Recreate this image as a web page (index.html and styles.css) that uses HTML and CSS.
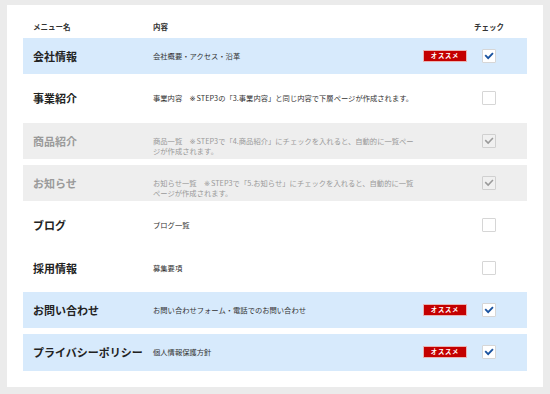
FILE: index.html
```html
<!DOCTYPE html>
<html lang="ja">
<head>
    <meta charset="UTF-8">
    <title>メニュー選択</title>
    <link rel="stylesheet" href="styles.css">
</head>
<body>
    <div class="card">
        <div class="menu-head">
            <div>メニュー名</div>
            <div>内容</div>
            <div></div>
            <div class="head-check">チェック</div>
        </div>
        <div class="menu-list">
            <div class="menu-row is-recommended">
                <div class="menu-name">会社情報</div>
                <div class="menu-desc">会社概要・アクセス・沿革</div>
                <div class="badge">オススメ</div>
                <div class="check-cell"><span class="checkbox is-checked"><svg viewBox="0 0 14 14"><path d="M2.6 6 L6 9.4 L11.6 3.6"/></svg></span></div>
            </div>
            <div class="menu-row">
                <div class="menu-name">事業紹介</div>
                <div class="menu-desc">事業内容　<span class="mark">※</span>STEP3の「3.事業内容」と同じ内容で下層ページが作成されます。</div>
                <div></div>
                <div class="check-cell"><span class="checkbox"></span></div>
            </div>
            <div class="menu-row is-disabled">
                <div class="menu-name">商品紹介</div>
                <div class="menu-desc">商品一覧　<span class="mark">※</span>STEP3で「4.商品紹介」にチェックを入れると、自動的に一覧ページが作成されます。</div>
                <div></div>
                <div class="check-cell"><span class="checkbox is-checked"><svg viewBox="0 0 14 14"><path d="M2.6 6 L6 9.4 L11.6 3.6"/></svg></span></div>
            </div>
            <div class="menu-row is-disabled">
                <div class="menu-name">お知らせ</div>
                <div class="menu-desc">お知らせ一覧　<span class="mark">※</span>STEP3で「5.お知らせ」にチェックを入れると、自動的に一覧ページが作成されます。</div>
                <div></div>
                <div class="check-cell"><span class="checkbox is-checked"><svg viewBox="0 0 14 14"><path d="M2.6 6 L6 9.4 L11.6 3.6"/></svg></span></div>
            </div>
            <div class="menu-row">
                <div class="menu-name">ブログ</div>
                <div class="menu-desc">ブログ一覧</div>
                <div></div>
                <div class="check-cell"><span class="checkbox"></span></div>
            </div>
            <div class="menu-row">
                <div class="menu-name">採用情報</div>
                <div class="menu-desc">募集要項</div>
                <div></div>
                <div class="check-cell"><span class="checkbox"></span></div>
            </div>
            <div class="menu-row is-recommended">
                <div class="menu-name">お問い合わせ</div>
                <div class="menu-desc">お問い合わせフォーム・電話でのお問い合わせ</div>
                <div class="badge">オススメ</div>
                <div class="check-cell"><span class="checkbox is-checked"><svg viewBox="0 0 14 14"><path d="M2.6 6 L6 9.4 L11.6 3.6"/></svg></span></div>
            </div>
            <div class="menu-row is-recommended">
                <div class="menu-name">プライバシーポリシー</div>
                <div class="menu-desc">個人情報保護方針</div>
                <div class="badge">オススメ</div>
                <div class="check-cell"><span class="checkbox is-checked"><svg viewBox="0 0 14 14"><path d="M2.6 6 L6 9.4 L11.6 3.6"/></svg></span></div>
            </div>
        </div>
    </div>
</body>
</html>
```

FILE: styles.css
```css
:root {
    --page-bg: #ebebeb;
    --blue-row: #d7eafc;
    --grey-row: #eeeeee;
    --text-color: #222;
    --muted-color: #9a9a9a;
    --badge-red: #c40000;
    --check-blue: #1a53a0;
}
* {
    box-sizing: border-box;
}
body {
    margin: 0;
    padding: 5px 7px 7px;
    background-color: var(--page-bg);
    color: var(--text-color);
    font-family: "Noto Sans CJK JP", "Noto Sans", sans-serif;
}
.card {
    background-color: #fff;
    padding: 16px 16px 16px;
}
.menu-head,
.menu-row {
    display: grid;
    grid-template-columns: 120px 1fr 44px 44px;
    padding: 0 16px 0 10px;
}
.menu-head {
    height: 17px;
    font-size: 7.5px;
    font-weight: 700;
    line-height: 12px;
    color: #333;
}
.head-check {
    text-align: center;
}
.menu-list {
    display: flex;
    flex-direction: column;
    gap: 6px;
}
.menu-row {
    height: 36.33px;
    align-items: center;
}
.menu-row.is-recommended {
    background-color: var(--blue-row);
}
.menu-row.is-disabled {
    background-color: var(--grey-row);
    color: var(--muted-color);
}
.menu-name {
    font-size: 11px;
    font-weight: 700;
    line-height: 14px;
}
.menu-desc {
    align-self: start;
    padding: 13px 4px 0 0;
    font-size: 7.3px;
    line-height: 10px;
    color: #333;
}
.mark {
    margin-right: 1px;
    font-family: "DejaVu Sans", sans-serif;
    line-height: 1;
}
.is-disabled .menu-desc {
    color: var(--muted-color);
}
.badge {
    height: 12px;
    background-color: var(--badge-red);
    border: 1px solid #e9b3b3;
    color: #fff;
    font-size: 6.3px;
    font-weight: 700;
    letter-spacing: 0.8px;
    line-height: 10px;
    text-align: center;
}
.check-cell {
    display: flex;
    justify-content: center;
}
.checkbox {
    display: block;
    width: 14px;
    height: 14px;
    background-color: #fff;
    border: 1px solid #d6d6d6;
    border-radius: 1px;
}
.checkbox svg {
    display: block;
    width: 12px;
    height: 12px;
}
.checkbox path {
    fill: none;
    stroke: var(--check-blue);
    stroke-width: 2.2;
}
.is-disabled .checkbox {
    background-color: #f0f0f0;
    border-color: #d0d0d0;
}
.is-disabled .checkbox path {
    stroke: #9a9a9a;
    stroke-width: 1.8;
}
```
